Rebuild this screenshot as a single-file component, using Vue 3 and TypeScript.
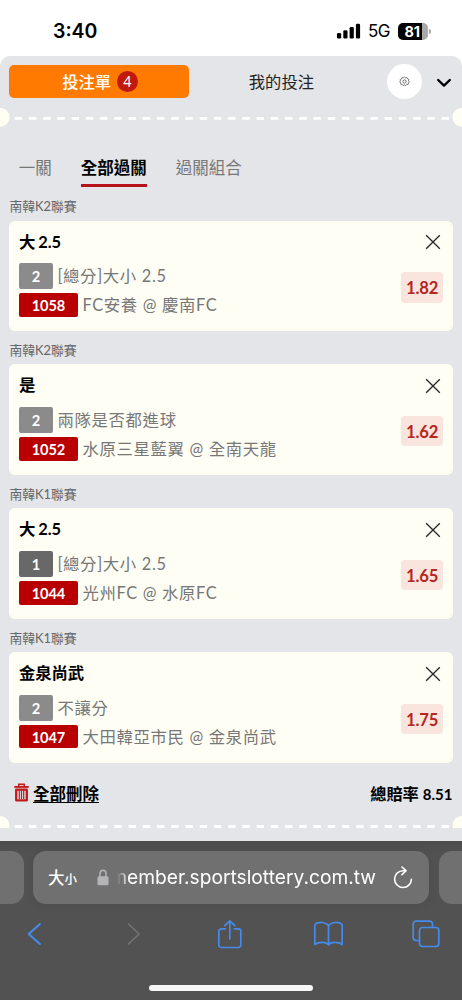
<script setup lang="ts">
interface Bet {
  league: string
  pick: string
  legs: number
  market: string
  code: string
  match: string
  odds: string
}

const bets: Bet[] = [
  { league: '南韓K2聯賽', pick: '大 2.5', legs: 2, market: '[總分]大小 2.5', code: '1058', match: 'FC安養 @ 慶南FC', odds: '1.82' },
  { league: '南韓K2聯賽', pick: '是', legs: 2, market: '兩隊是否都進球', code: '1052', match: '水原三星藍翼 @ 全南天龍', odds: '1.62' },
  { league: '南韓K1聯賽', pick: '大 2.5', legs: 1, market: '[總分]大小 2.5', code: '1044', match: '光州FC @ 水原FC', odds: '1.65' },
  { league: '南韓K1聯賽', pick: '金泉尚武', legs: 2, market: '不讓分', code: '1047', match: '大田韓亞市民 @ 金泉尚武', odds: '1.75' },
]
</script>

<template>
  <div class="phone">
    <header class="status">
      <span class="time">3:40</span>
      <div class="signals">
        <svg class="bars" width="24" height="16" viewBox="0 0 24 16">
          <rect x="0" y="10" width="4.2" height="5.5" rx="1.3" />
          <rect x="6.3" y="7.3" width="4.2" height="8.2" rx="1.3" />
          <rect x="12.6" y="4" width="4.2" height="11.5" rx="1.3" />
          <rect x="18.9" y="0.7" width="4.2" height="14.8" rx="1.3" />
        </svg>
        <span class="net">5G</span>
        <div class="battery"><span>81</span></div>
        <i class="nub"></i>
      </div>
    </header>

    <main class="slip">
      <nav class="top">
        <div class="slip-btn"><span>投注單</span><b>4</b></div>
        <div class="mine">我的投注</div>
        <div class="gear">
          <svg width="11" height="11" viewBox="0 0 12 12" fill="none" stroke="#444" stroke-width="0.8">
            <path d="M6 1 7.2 2 8.7 1.7 9.3 3.1 10.8 3.8 10.4 5.3 11.2 6.5 10.2 7.5 10 9.1 8.5 9.2 7.4 10.4 6 9.7 4.5 10.4 3.5 9.2 2 9 1.8 7.5 .8 6.4 1.6 5.2 1.3 3.8 2.7 3.1 3.3 1.7 4.8 2Z" />
            <circle cx="6" cy="6" r="1.8" />
          </svg>
        </div>
        <svg class="chev" width="16" height="10" viewBox="0 0 16 10" fill="none" stroke="#000" stroke-width="2.4" stroke-linecap="round" stroke-linejoin="round">
          <path d="M2.2 2 8 7.6 13.8 2" />
        </svg>
      </nav>

      <svg class="tear" width="462" height="20" viewBox="0 0 462 20">
        <circle cx="0" cy="10.2" r="9.5" fill="#fffef2" />
        <circle cx="462" cy="10.2" r="9.5" fill="#fffef2" />
        <path d="M14.7 11.3H449" stroke="#fff" stroke-width="2.8" stroke-dasharray="7.4 6.83" />
      </svg>

      <div class="tabs">
        <span>一關</span>
        <span class="on">全部過關</span>
        <span>過關組合</span>
      </div>

      <section v-for="bet in bets" :key="bet.code" class="bet">
        <h3>{{ bet.league }}</h3>
        <article>
          <div class="info">
            <strong>{{ bet.pick }}</strong>
            <p><span class="legs" :class="{ dark: bet.legs === 1 }">{{ bet.legs }}</span><span class="desc">{{ bet.market }}</span></p>
            <p class="game"><span class="code">{{ bet.code }}</span><span class="desc">{{ bet.match }}</span></p>
          </div>
          <div class="side">
            <svg width="16" height="16" viewBox="0 0 16 16" fill="none" stroke="#222" stroke-width="1.3">
              <path d="M1.2 1.2 14.8 14.8M14.8 1.2 1.2 14.8" />
            </svg>
            <span class="odds">{{ bet.odds }}</span>
          </div>
        </article>
      </section>

      <footer class="sum">
        <svg width="15" height="19" viewBox="0 0 15 19" fill="none" stroke="#c01a1c">
          <path d="M.3 3.9H14.7" stroke-width="1.9" />
          <path d="M4.8 3.4V1.2H10.2V3.4" stroke-width="1.5" />
          <path d="M2.2 6.7H12.8V17.3H2.2Z" stroke-width="2.3" stroke-linejoin="round" />
          <path d="M5.3 7V16M7.5 7V16M9.7 7V16" stroke-width="1.2" />
        </svg>
        <u>全部刪除</u>
        <span class="total">總賠率 <span class="sum-odds">8.51</span></span>
      </footer>

      <svg class="tear end" width="462" height="12" viewBox="0 0 462 12">
        <circle cx="0" cy="9.5" r="9.5" fill="#fffef2" />
        <circle cx="462" cy="9.5" r="9.5" fill="#fffef2" />
        <path d="M14.7 10.5H449" stroke="#fff" stroke-width="2.8" stroke-dasharray="7.4 6.83" />
      </svg>
    </main>

    <div class="browser">
      <div class="urls">
        <div class="tab-edge"></div>
        <div class="url">
          <span class="aa">大<small>小</small></span>
          <svg class="lock" width="12" height="17" viewBox="0 0 12 17">
            <path d="M3 8V4.6a3 3.3 0 0 1 6 0V8" fill="none" stroke="#b4b4b6" stroke-width="1.5" />
            <rect x="0.5" y="7.2" width="11" height="9.1" rx="1.5" fill="#b4b4b6" />
          </svg>
          <span class="host">member.sportslottery.com.tw</span>
          <svg class="reload" width="20" height="23" viewBox="0 0 20 23" fill="none" stroke="#fff" stroke-width="1.6" stroke-linecap="round" stroke-linejoin="round">
            <path d="M12 4.7H10A8.4 8.4 0 1 0 18.4 13.2" />
            <path d="M9 1 13 4.7 9 8.6" />
          </svg>
        </div>
        <div class="tab-edge right"></div>
      </div>
      <div class="tools">
        <svg width="28" height="24" viewBox="-6.3 0 28 24"><path d="M12.6 2 1.4 12 12.6 22" stroke-width="2" /></svg>
        <svg class="off" width="28" height="24" viewBox="-9 0 28 24"><path d="M1.4 2 12.2 12 1.4 22" stroke-width="1.6" /></svg>
        <svg width="28" height="30" viewBox="-1.8 0 28 30">
          <path d="M8.5 9.8H4.5a2.5 2.5 0 0 0-2.5 2.5V26a2.5 2.5 0 0 0 2.5 2.5H21.5A2.5 2.5 0 0 0 24 26V12.3A2.5 2.5 0 0 0 21.5 9.8H17.5M13 20V2M8 6.7 13 1.8 18 6.7" />
        </svg>
        <svg width="30" height="26" viewBox="-0.5 0 30 26">
          <path d="M15 5C12.5.8 4.5.4 1.3 3.5V23.5C5 20.6 12.5 20.6 15 23.8 17.5 20.6 25 20.6 28.7 23.5V3.5C25.5.4 17.5.8 15 5ZV23.5" />
        </svg>
        <svg width="28" height="28" viewBox="0 0 28 28">
          <path d="M7.5 20.5H4.2A3 3 0 0 1 1.2 17.5V4.2A3 3 0 0 1 4.2 1.2H17.5A3 3 0 0 1 20.5 4.2V7.5" />
          <rect x="7.5" y="7.5" width="19.3" height="19" rx="3" />
        </svg>
      </div>
      <div class="home"></div>
    </div>
  </div>
</template>

<style>
body {
  margin: 0;
}
</style>

<style scoped>
* {
  box-sizing: border-box;
}
.phone {
  width: 462px;
  height: 1000px;
  overflow: hidden;
  background: #fff;
  display: flex;
  flex-direction: column;
  font-family: Lato, "Noto Sans CJK TC", sans-serif;
  white-space: nowrap;
}
svg {
  display: block;
  flex: none;
}
.status {
  height: 56px;
  flex: none;
  display: flex;
  justify-content: space-between;
  padding: 20px 31px 0 53px;
  font-family: Inter, sans-serif;
}
.time {
  font-size: 19.5px;
  line-height: 22px;
  font-weight: 600;
}
.signals {
  display: flex;
  height: 22px;
  align-items: center;
}
.net {
  font-size: 17px;
  letter-spacing: -0.5px;
  margin: 0 8px 0 7px;
  width: 22px;
}
.battery {
  width: 30px;
  height: 17px;
  padding-right: 1.5px;
  border-radius: 5px;
  background: linear-gradient(90deg, #000 81%, #a9a9a9 81%);
  color: #fff;
  font-weight: 700;
  font-size: 14.5px;
  line-height: 17px;
  text-align: center;
}
.nub {
  width: 2px;
  height: 5px;
  margin-left: 1px;
  border-radius: 0 2px 2px 0;
  background: #a9a9a9;
}
.slip {
  height: 785px;
  flex: none;
  background: #e4e5e8;
  border-radius: 10px 10px 0 0;
  overflow: hidden;
}
.top {
  display: flex;
  align-items: center;
  height: 51px;
  padding-left: 9.4px;
  font-size: 16.3px;
}
.slip-btn {
  width: 179.5px;
  height: 33px;
  border-radius: 5px;
  background: #ff7a00;
  color: #fff;
  font-weight: 500;
  display: flex;
  justify-content: center;
  align-items: center;
  gap: 6px;
  padding-left: 2px;
}
.slip-btn span {
  margin-top: -2px;
}
.slip-btn b {
  width: 21px;
  height: 21px;
  border-radius: 50%;
  background: #c1180f;
  font-size: 14.5px;
  font-weight: 400;
  line-height: 21px;
  text-align: center;
}
.mine {
  width: 185px;
  margin-top: -2px;
  text-align: center;
  color: #222;
}
.gear {
  width: 35px;
  height: 35px;
  margin-left: 13px;
  border-radius: 50%;
  background: #fff;
  display: grid;
  place-items: center;
}
.chev {
  margin: 2px 0 0 14px;
}
.tear {
  height: 20px;
}
.tear.end {
  height: 12px;
}
.tabs {
  display: flex;
  gap: 29px;
  padding: 27px 0 0 18.8px;
  height: 77px;
  font-size: 16.5px;
  line-height: 28px;
  color: #777;
}
.tabs span {
  height: 33.4px;
}
.tabs .on {
  color: #000;
  font-weight: 700;
  border-bottom: 3.5px solid #b5121b;
}
.bet {
  height: 143.9px;
}
h3 {
  margin: 0;
  padding-left: 9.4px;
  height: 16.5px;
  line-height: 5px;
  font-size: 12.8px;
  font-weight: 400;
  color: #666;
}
article {
  margin: 0 9.4px;
  height: 110.5px;
  border-radius: 6px;
  background: #fffef5;
  display: flex;
  justify-content: space-between;
  padding: 0 9.5px;
}
strong {
  display: block;
  height: 42px;
  line-height: 42px;
  font-size: 16.4px;
  word-spacing: -0.8px;
  letter-spacing: -0.1px;
  font-weight: 700;
}
p {
  margin: 0;
  display: flex;
  align-items: center;
  height: 27px;
  font-size: 16.4px;
  letter-spacing: 0.65px;
  color: #777;
}
.desc {
  margin-top: -1.4px;
}
.game {
  height: 31px;
}
.legs,
.code {
  color: #fff;
  font-size: 14.6px;
  font-weight: 700;
  text-align: center;
  letter-spacing: -0.2px;
  border-radius: 2px;
}
.legs {
  width: 34px;
  height: 26px;
  line-height: 27px;
  margin-right: 4.5px;
  background: #8b8b8b;
}
.legs.dark {
  background: #686868;
}
.code {
  width: 59px;
  height: 23.5px;
  line-height: 25px;
  margin-right: 4.5px;
  background: #b90000;
}
.side {
  display: flex;
  flex-direction: column;
  align-items: flex-end;
  padding-top: 13.6px;
}
.side svg {
  margin-right: 2px;
}
.odds {
  margin-top: 22px;
  width: 42px;
  height: 30.5px;
  line-height: 32.5px;
  border-radius: 4px;
  background: #f9e4de;
  color: #b5251c;
  font-size: 16.6px;
  font-weight: 700;
  letter-spacing: -0.2px;
  text-align: center;
}
.sum {
  display: flex;
  align-items: center;
  height: 28px;
  margin: -0.6px 0 9px;
  padding: 0 9.5px 0 13.5px;
  font-size: 16.5px;
  font-weight: 600;
}
.sum u {
  margin-left: 4.5px;
  text-underline-offset: 2px;
  text-decoration-thickness: 1.3px;
}
.total {
  margin-left: auto;
  font-size: 16.2px;
}
.sum-odds {
  font-size: 15px;
  font-weight: 700;
}
.browser {
  height: 159px;
  background: linear-gradient(#4d4d4d, #525252 15px, #525252);
}
.urls {
  display: flex;
  gap: 9.5px;
  padding-top: 9.5px;
  height: 63px;
}
.tab-edge {
  width: 23.5px;
  flex: none;
  background: #707070;
  border-radius: 0 13px 13px 0;
}
.tab-edge.right {
  border-radius: 13px 0 0 13px;
}
.url {
  width: 396px;
  flex: none;
  border-radius: 13px;
  background: #707070;
  box-shadow: 0 1px 8px #00000014;
  color: #fff;
  display: flex;
  align-items: center;
  justify-content: flex-end;
  padding-right: 16.5px;
}
.aa {
  margin-right: auto;
  padding-left: 15px;
  font-size: 16.5px;
  font-weight: 500;
}
.aa small {
  font-size: 12.5px;
}
.host {
  margin-left: 1px;
  font-family: Inter, sans-serif;
  font-size: 19.2px;
  line-height: 26px;
  -webkit-mask-image: linear-gradient(90deg, transparent 7px, #000 19px);
  mask-image: linear-gradient(90deg, transparent 7px, #000 19px);
}
.reload {
  margin-left: 16.5px;
}
.tools {
  display: flex;
  justify-content: space-between;
  align-items: center;
  height: 59px;
  padding: 0 22px 0 20.5px;
  fill: none;
  stroke: #478bea;
  stroke-width: 1.7;
  stroke-linejoin: round;
  stroke-linecap: round;
}
.tools .off {
  stroke: #737373;
}
.home {
  width: 164px;
  height: 6px;
  margin: 21.5px auto 0;
  border-radius: 3px;
  background: #f6f6f6;
}
</style>
